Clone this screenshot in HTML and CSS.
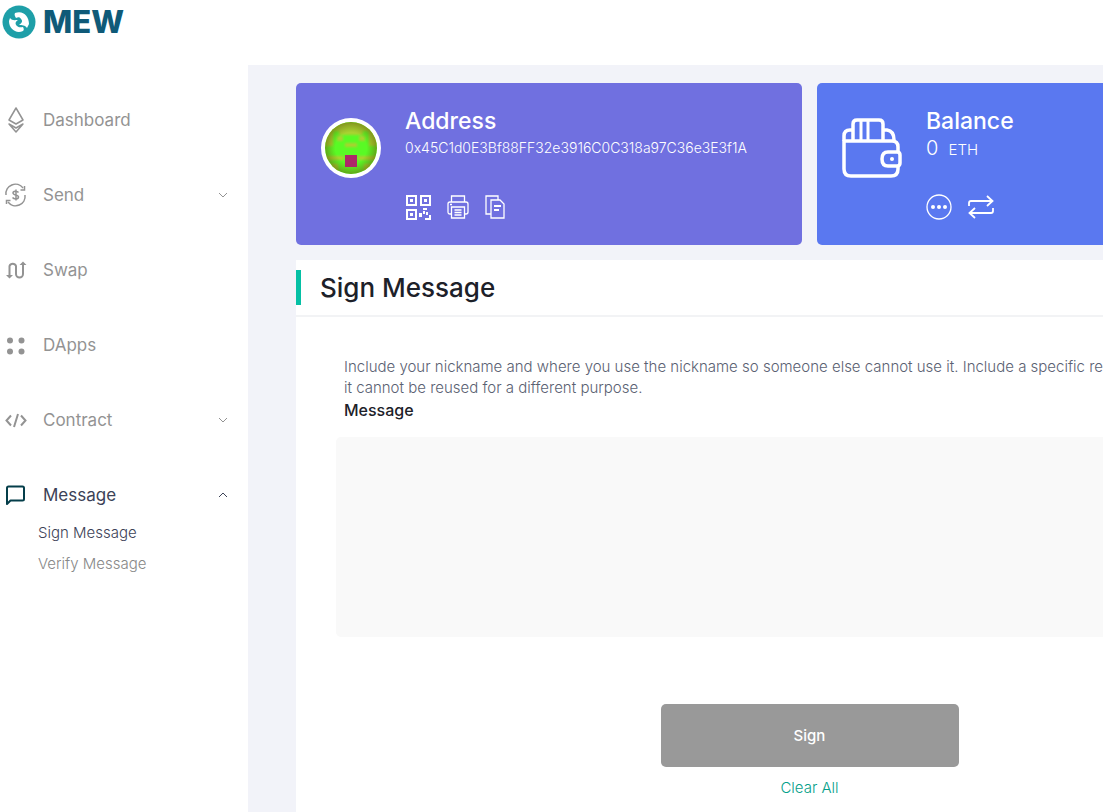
FILE: index.html
```html
<!DOCTYPE html>
<html lang="en">
<head>
    <meta charset="UTF-8">
    <meta name="viewport" content="width=device-width, initial-scale=1.0">
    <title>MEW - Sign Message</title>
    <link rel="stylesheet" href="styles.css">
</head>
<body>
    <header>
        <a href="#" class="logo">
            <svg width="34" height="34" viewBox="0 0 34 34">
                <circle cx="17" cy="17" r="16.500" fill="#1e9fa8"/>
                <path d="M13 8C21 5 27 11 27 19L25 23C23 20 20 20 17 20C20 18 21 16 19 14C18 12 16 12 14 13C13 11 12 10 13 8Z" fill="#fff"/>
                <path d="M8 13C10 16 13 15 16 15C13 17 13 19 15 21C17 23 19 22 21 22C22 24 22 25 21 26C14 29 7 24 7 16Z" fill="#fff"/>
            </svg>
            <span>MEW</span>
        </a>
    </header>

    <div class="page">
        <nav>
            <ul class="menu">
                <li>
                    <a href="#dashboard">
                        <svg class="menu-icon" viewBox="0 0 24 26" fill="none" stroke="currentColor" stroke-width="1.500" stroke-linejoin="round">
                            <path d="M12 1L19 13L12 17L5 13Z"/>
                            <path d="M5 17L12 21L19 17L12 25Z"/>
                        </svg>
                        <span>Dashboard</span>
                    </a>
                </li>
                <li>
                    <a href="#send">
                        <svg class="menu-icon" viewBox="0 0 24 26" fill="none" stroke="currentColor" stroke-width="1.500">
                            <path d="M2 13A9.500 9.500 0 0 1 19 6M21 13A9.500 9.500 0 0 1 4 20"/>
                            <path d="M20.500 4V8H16.500M2.500 22V18.500H6.500"/>
                            <path d="M14.500 10.500C13 8.500 9 9 9 11C9 13.500 14.500 12.500 14.500 15C14.500 17.500 10 17.500 8.500 15.500M12 7.500V18.500"/>
                        </svg>
                        <span>Send</span>
                        <svg class="arrow" viewBox="0 0 10 6"><path d="M1 1L5 5L9 1"/></svg>
                    </a>
                </li>
                <li>
                    <a href="#swap">
                        <svg class="menu-icon" viewBox="0 0 24 26" fill="none" stroke="currentColor" stroke-width="2">
                            <path d="M5.500 20V9A3.500 3.500 0 0 1 12 9V17A3.500 3.500 0 0 0 19 17V7"/>
                            <path d="M2 18H9L5.500 21.500ZM15.500 8H22.500L19 4.500Z" fill="currentColor" stroke="none"/>
                        </svg>
                        <span>Swap</span>
                    </a>
                </li>
                <li>
                    <a href="#dapps">
                        <svg class="menu-icon" viewBox="0 0 24 26" fill="currentColor">
                            <circle cx="6" cy="8.500" r="3"/>
                            <circle cx="17.500" cy="8.500" r="3"/>
                            <circle cx="6" cy="19.500" r="3"/>
                            <circle cx="17.500" cy="19.500" r="3"/>
                        </svg>
                        <span>DApps</span>
                    </a>
                </li>
                <li>
                    <a href="#contract">
                        <svg class="menu-icon" viewBox="0 0 24 26" fill="none" stroke="currentColor" stroke-width="2">
                            <path d="M7 8.500L2.500 13.500L7 18.500M17 8.500L21.500 13.500L17 18.500M14 7L10 20"/>
                        </svg>
                        <span>Contract</span>
                        <svg class="arrow" viewBox="0 0 10 6"><path d="M1 1L5 5L9 1"/></svg>
                    </a>
                </li>
                <li class="active">
                    <a href="#message">
                        <svg class="menu-icon" viewBox="0 0 24 26" fill="none" stroke="#053e4a" stroke-width="2" stroke-linejoin="round">
                            <path d="M3 22V6Q3 4.500 4.500 4.500H18.500Q20 4.500 20 6V17Q20 18.500 18.500 18.500H6.500Z"/>
                        </svg>
                        <span>Message</span>
                        <svg class="arrow" viewBox="0 0 10 6"><path d="M1 5L5 1L9 5"/></svg>
                    </a>
                    <ul class="submenu">
                        <li class="current"><a href="#sign">Sign Message</a></li>
                        <li><a href="#verify">Verify Message</a></li>
                    </ul>
                </li>
            </ul>
        </nav>

        <main>
            <div class="grid">
                <section class="card address">
                    <svg class="card-icon" viewBox="0 0 60 60">
                        <defs>
                            <radialGradient id="shade">
                                <stop offset="0.600" stop-color="#6a7a10" stop-opacity="0"/>
                                <stop offset="1" stop-color="#6a6a10" stop-opacity="0.600"/>
                            </radialGradient>
                            <filter id="soft"><feGaussianBlur stdDeviation="1"/></filter>
                            <clipPath id="face"><circle cx="30" cy="30" r="26"/></clipPath>
                        </defs>
                        <circle cx="30" cy="30" r="30" fill="#fff"/>
                        <g clip-path="url(#face)">
                            <path d="M0 0H60V60H0Z" fill="#59fa25"/>
                            <path d="M4 4H56V13H4ZM4 13H12V28H4ZM48 13H56V28H48ZM18 13H42V17H18ZM16 18H22V23H16ZM38 18H44V23H38ZM24 25H36V29H24ZM4 38H23V42H4ZM37 38H56V42H37ZM10 46H17V56H10ZM43 46H50V56H43Z" fill="#a9d232" filter="url(#soft)"/>
                            <circle cx="30" cy="30" r="26" fill="url(#shade)"/>
                            <path d="M24 37H36V49H24Z" fill="#ad2868"/>
                        </g>
                    </svg>
                    <div>
                        <h2>Address</h2>
                        <p class="hash">0x45C1d0E3Bf88FF32e3916C0C318a97C36e3E3f1A</p>
                        <div class="tools">
                            <button type="button" aria-label="QR code">
                                <svg width="26" height="26" viewBox="0 0 26 26" fill="none" stroke="#fff" stroke-width="2">
                                    <path d="M2 2H11V11H2ZM16 2H25V11H16ZM2 16H11V25H2Z"/>
                                    <path d="M5 5H8V8H5ZM19 5H22V8H19ZM5 19H8V22H5ZM14 19H17V23H14ZM18 14H22V16H18ZM18 17H20V20H18ZM21 18H23V21H21ZM24 21H26V26H20V24H24Z" fill="#fff" stroke="none"/>
                                </svg>
                            </button>
                            <button type="button" aria-label="Print">
                                <svg width="22" height="26" viewBox="0 0 22 26" fill="none" stroke="#fff" stroke-width="1.300">
                                    <path d="M4.500 8V2H17.500V8M4.500 20H3Q1 20 1 18V10Q1 8 3 8H19Q21 8 21 10V18Q21 20 19 20H17.500"/>
                                    <path d="M4.500 13H17.500V24H4.500ZM7.500 16H14.500M7.500 18.500H14.500M7.500 21H14.500M3 10.500H5"/>
                                </svg>
                            </button>
                            <button type="button" aria-label="Copy">
                                <svg width="20" height="26" viewBox="0 0 20 26" fill="none" stroke="#fff" stroke-width="1.300">
                                    <path d="M6 20H1V2H13V6"/>
                                    <path d="M6 6H15L19 10V24H6Z"/>
                                    <path d="M9 12H16M9 16H14" stroke-width="2"/>
                                </svg>
                            </button>
                        </div>
                    </div>
                </section>

                <section class="card balance">
                    <svg class="card-icon" viewBox="0 0 60 60" fill="none" stroke="#fff" stroke-width="3.500" stroke-linejoin="round">
                        <path d="M56 34V29Q56 23 50 23H2V51Q2 58 9 58H49Q56 58 56 51V48"/>
                        <path d="M2 23V18Q2 12 8 12H11M41 12H45Q52 13 52 22"/>
                        <path d="M11 23V6Q11 2 15 2H37Q41 2 41 6V23"/>
                        <path d="M19 2V23M26 2V23" stroke-width="3"/>
                        <path d="M56 34H46Q40 34 40 41T46 48H55Q58 48 58 45V37Q58 34 55 34"/>
                        <circle cx="50" cy="41" r="2" fill="#fff" stroke="none"/>
                    </svg>
                    <div>
                        <h2>Balance</h2>
                        <p class="amount"><span>0</span> ETH</p>
                        <div class="tools">
                            <button type="button" aria-label="More">
                                <svg width="26" height="26" viewBox="0 0 26 26">
                                    <circle cx="13" cy="13" r="12" fill="none" stroke="#fff" stroke-width="1.300"/>
                                    <g fill="#fff">
                                        <circle cx="7" cy="13" r="2"/>
                                        <circle cx="13" cy="13" r="2"/>
                                        <circle cx="19" cy="13" r="2"/>
                                    </g>
                                </svg>
                            </button>
                            <button type="button" aria-label="Refresh">
                                <svg width="26" height="26" viewBox="0 0 26 26" fill="none" stroke="#fff" stroke-width="1.800">
                                    <path d="M1 12V9Q1 7 3 7H24M19 2L24.500 7L19 12"/>
                                    <path d="M25 14V17Q25 19 23 19H2M7 14L1.500 19L7 24"/>
                                </svg>
                            </button>
                        </div>
                    </div>
                </section>

                <section class="panel">
                    <div class="panel-header">
                        <h1>Sign Message</h1>
                    </div>
                    <form>
                        <p>Include your nickname and where you use the nickname so someone else cannot use it. Include a specific reason for the message so<br>it cannot be reused for a different purpose.</p>
                        <label for="message">Message</label>
                        <textarea id="message"></textarea>
                        <button type="submit">Sign</button>
                        <a href="#clear">Clear All</a>
                    </form>
                </section>
            </div>
        </main>
    </div>
</body>
</html>
```
FILE: styles.css
```css
* {
    box-sizing: border-box;
}
body {
    font-family: Inter, "Open Sans", sans-serif;
    margin: 0;
    color: #1d2129;
    background: #fff;
    display: flex;
    flex-direction: column;
    min-height: 100vh;
    overflow-x: hidden;
}
h1, h2, p, ul {
    margin: 0;
    padding: 0;
}
ul {
    list-style: none;
}
a {
    color: inherit;
    text-decoration: none;
}
header {
    height: 65px;
    padding: 5px 2px;
}
.logo {
    display: flex;
    align-items: center;
    gap: 7px;
    width: max-content;
    font-size: 31px;
    line-height: 34px;
    font-weight: 800;
    color: #0f5a78;
}
.page {
    display: flex;
    flex: 1;
}
nav {
    flex: 0 0 248px;
    padding-top: 32px;
}
.menu {
    display: flex;
    flex-direction: column;
    gap: 30px;
    font-size: 17px;
    font-weight: 400;
    color: #939393;
}
.menu > li > a {
    display: flex;
    align-items: center;
    height: 45px;
    padding: 0 20px 0 4px;
}
.menu-icon {
    width: 24px;
    height: 26px;
    margin-right: 15px;
}
.arrow {
    width: 10px;
    height: 6px;
    margin-left: auto;
    fill: none;
    stroke: currentColor;
}
.menu .active {
    color: #3c4257;
}
.submenu {
    padding-left: 38px;
    font-size: 15px;
    line-height: 31px;
    font-weight: 300;
    color: #888;
}
.submenu .current {
    color: #3c4257;
}
main {
    flex: 1;
    padding: 18px 48px 0;
    background: #f2f3f9;
    display: flex;
}
.grid {
    flex: 1;
    display: grid;
    grid-template-columns: repeat(2, minmax(506px, 1fr));
    grid-template-rows: auto 1fr;
    gap: 15px;
}
.card {
    display: flex;
    min-height: 162px;
    padding: 24px 25px;
    gap: 24px;
    border-radius: 5px;
    color: #fff;
}
.address {
    background: #7070e0;
}
.balance {
    background: #5a78f0;
}
.card-icon {
    width: 60px;
    height: 60px;
    margin-top: 11px;
    overflow: visible;
}
.card h2 {
    font-size: 23px;
    line-height: 28px;
    font-weight: 500;
}
.card p {
    height: 26px;
    font-size: 14px;
    line-height: 26px;
    font-weight: 300;
}
.card .amount {
    font-size: 15px;
}
.amount span {
    font-size: 20px;
    margin-right: 6px;
}
.tools {
    display: flex;
    gap: 16px;
    margin-top: 33px;
}
.tools button {
    padding: 0;
    border: none;
    background: none;
    cursor: pointer;
}
.tools svg {
    display: block;
}
.panel {
    grid-column: span 2;
    background: #fff;
}
.panel-header {
    padding: 10px 0;
    border-bottom: 2px solid #f2f3f5;
}
.panel h1 {
    font-size: 26px;
    line-height: 35px;
    font-weight: 500;
    border-left: 5px solid #05c0a5;
    padding-left: 19px;
}
form {
    display: flex;
    flex-direction: column;
    align-items: center;
    padding: 39px 40px 20px;
    font-size: 15px;
}
form p, form label {
    align-self: stretch;
    padding-left: 8px;
}
form p {
    margin-right: -20px;
    line-height: 21px;
    font-weight: 300;
    color: #5a6172;
}
form label {
    font-size: 16px;
    line-height: 24px;
    font-weight: 500;
}
textarea {
    width: 100%;
    height: 200px;
    margin-top: 15px;
    padding: 20px;
    font-family: inherit;
    font-size: 15px;
    background: #f9f9f9;
    border: none;
    border-radius: 5px;
    resize: none;
}
form button {
    width: 298px;
    height: 63px;
    margin: 67px 0 10px;
    font-family: inherit;
    font-size: 15px;
    font-weight: 500;
    color: #fff;
    background: #999;
    border: none;
    border-radius: 5px;
    cursor: pointer;
}
form a {
    line-height: 21px;
    font-weight: 300;
    color: #05a08a;
}
```
